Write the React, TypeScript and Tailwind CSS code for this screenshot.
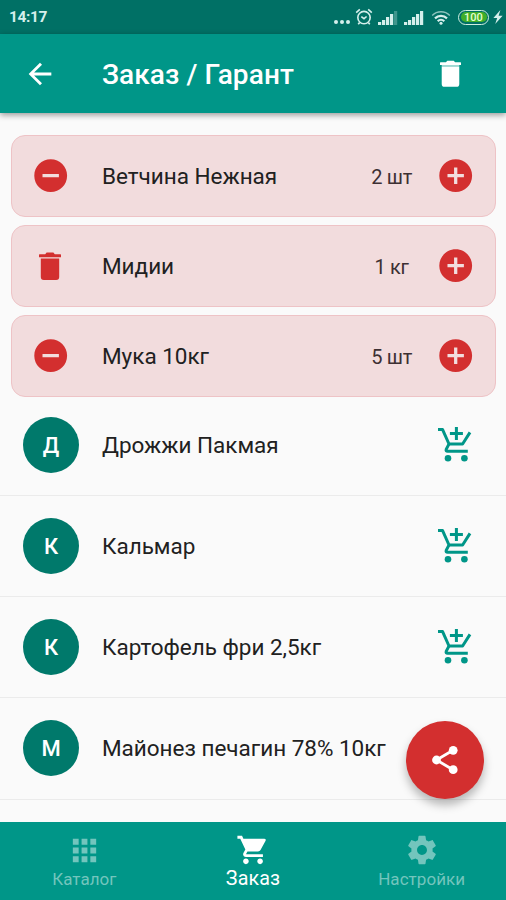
import React from 'react';
import { clsx } from 'clsx';
import { MdAddCircle, MdApps, MdArrowBack, MdRemoveCircle, MdShoppingCart } from 'react-icons/md';

interface OrderItem {
  name: string;
  amount: string;
  last?: boolean;
}

interface CatalogItem {
  name: string;
  letter: string;
}

const orderItems: OrderItem[] = [
  { name: 'Ветчина Нежная', amount: '2 шт' },
  { name: 'Мидии', amount: '1 кг', last: true },
  { name: 'Мука 10кг', amount: '5 шт' },
];

const catalogItems: CatalogItem[] = [
  { name: 'Дрожжи Пакмая', letter: 'Д' },
  { name: 'Кальмар', letter: 'К' },
  { name: 'Картофель фри 2,5кг', letter: 'К' },
  { name: 'Майонез печагин 78% 10кг', letter: 'М' },
];

const SettingsIcon: React.FC = () => (
  <svg viewBox="0 0 24 24" className="size-[34px]" fill="currentColor">
    <path d="M19.43 12.98c.04-.32.07-.64.07-.98s-.03-.66-.07-.98l2.11-1.65c.19-.15.24-.42.12-.64l-2-3.46c-.12-.22-.39-.3-.61-.22l-2.49 1c-.52-.4-1.08-.73-1.69-.98l-.38-2.65C14.46 2.18 14.25 2 14 2h-4c-.25 0-.46.18-.49.42l-.38 2.65c-.61.25-1.17.59-1.69.98l-2.49-1c-.23-.09-.49 0-.61.22l-2 3.46c-.13.22-.07.49.12.64l2.11 1.65c-.04.32-.07.65-.07.98s.03.66.07.98l-2.11 1.65c-.19.15-.24.42-.12.64l2 3.46c.12.22.39.3.61.22l2.49-1c.52.4 1.08.73 1.69.98l.38 2.65c.03.24.24.42.49.42h4c.25 0 .46-.18.49-.42l.38-2.65c.61-.25 1.17-.59 1.69-.98l2.49 1c.23.09.49 0 .61-.22l2-3.46c.12-.22.07-.49-.12-.64l-2.11-1.65zM12 15.5c-1.93 0-3.5-1.57-3.5-3.5s1.57-3.5 3.5-3.5 3.5 1.57 3.5 3.5-1.57 3.5-3.5 3.5z" />
  </svg>
);

const TrashIcon: React.FC<{ className: string; solid?: boolean }> = ({ className, solid }) => (
  <svg viewBox="0 0 22 28" className={className} fill="currentColor">
    <path d="M.6 2.2h5.6L7.6.6h6.8l1.4 1.6h5.6q.6 0 .6.6v2.4H0V2.8q0-.6.6-.6z" />
    <path d="M1.8 6.6h18.4V25a3 3 0 0 1-3 3H4.8a3 3 0 0 1-3-3z" />
    {solid && <path d="M1.8 5.2h18.4v1.4H1.8z" opacity="0.7" />}
  </svg>
);

const AddToCartIcon: React.FC = () => (
  <svg viewBox="0 0 34 35" className="mb-[2px] h-[35px] w-[34px] text-[#009688]" fill="none" stroke="currentColor" strokeWidth="3">
    <path d="M0 2.6h4.6L11 17h13.6L32 5.4" strokeLinejoin="round" />
    <path d="M10.8 17.4 8.2 22.4Q7.6 24.3 9.6 24.3H29.8" />
    <path d="M18.4 0v13M11.9 6.5h13" />
    <circle cx="10" cy="31.3" r="3.3" fill="currentColor" stroke="none" />
    <circle cx="26.4" cy="31.3" r="3.3" fill="currentColor" stroke="none" />
  </svg>
);

const ShareIcon: React.FC = () => (
  <svg viewBox="0 0 28 30" className="h-[30px] w-[28px]" fill="currentColor">
    <path d="M22 5.3 5.5 15 22 24.7" fill="none" stroke="currentColor" strokeWidth="2.8" />
    <circle cx="5.5" cy="15" r="4.4" />
    <circle cx="22.2" cy="5.3" r="4.4" />
    <circle cx="22.2" cy="24.7" r="4.4" />
  </svg>
);

const AlarmIcon: React.FC = () => (
  <svg viewBox="0 0 18 18" className="ml-[5px] h-[18px] w-[18px]" fill="none" stroke="currentColor" strokeWidth="1.6">
    <circle cx="9" cy="9.6" r="6.2" />
    <path d="M6.3 8.6 9 10.7l2.6-2.2M1.2 4.6 4.8 1.4M16.8 4.6l-3.6-3.2M4.6 14.6l-1.4 1.6M13.4 14.6l1.4 1.6" />
  </svg>
);

const SignalIcon: React.FC<{ weak?: boolean }> = ({ weak }) => (
  <svg viewBox="0 0 20 14" className="h-[14px] w-[20px]" fill="currentColor">
    <rect x="0" y="11" width="3.2" height="3" />
    <rect x="4" y="9" width="3.2" height="5" />
    <rect x="8" y="6" width="3.2" height="8" />
    <rect x="12" y="3" width="3.2" height="11" />
    <rect x="16" y="0" width="3.2" height="14" opacity={weak ? 0.3 : 1} />
  </svg>
);

const WifiIcon: React.FC = () => (
  <svg viewBox="0 0 20 15" className="ml-[7px] h-[15px] w-[20px]" fill="none" stroke="currentColor">
    <path d="M1.2 5.4a12.6 12.6 0 0 1 17.6 0" strokeWidth="1.4" opacity="0.65" />
    <path d="M4 8.4a8.6 8.6 0 0 1 12 0" strokeWidth="2.2" />
    <path d="M6.7 11.2a4.8 4.8 0 0 1 6.6 0" strokeWidth="2.2" />
    <circle cx="10" cy="13.2" r="1.5" fill="currentColor" stroke="none" />
  </svg>
);

const StatusBar: React.FC = () => (
  <div className="flex h-[34px] items-center bg-[#007065] pr-[3px] pl-[9px] text-[#d5efec]">
    <span className="flex-1 pt-[2px] text-[15.5px] font-bold tracking-[-0.4px]">14:17</span>
    <div className="flex gap-[2px] pt-[9px]">
      <i className="size-[4px] rounded-full bg-current" />
      <i className="size-[4px] rounded-full bg-current" />
      <i className="size-[4px] rounded-full bg-current" />
    </div>
    <AlarmIcon />
    <div className="ml-[5px] flex gap-[6px] pt-[1px]">
      <SignalIcon weak />
      <SignalIcon />
    </div>
    <WifiIcon />
    <div className="ml-[7px] flex h-[15px] w-[31px] items-center rounded-full border-[1.5px] border-[#cfeee0] p-[1.5px]">
      <div className="flex h-full flex-1 items-center justify-center rounded-full bg-[#3fae2a] text-[11px] leading-none font-medium text-[#e6ffd2]">
        100
      </div>
    </div>
    <svg viewBox="0 0 10 14" className="ml-[4px] h-[14px] w-[10px]" fill="currentColor">
      <path d="M7.4 0 .4 8h3.8L2.2 14 9.6 5.8H5.6z" />
    </svg>
  </div>
);

const OrderCard: React.FC<{ item: OrderItem }> = ({ item }) => (
  <div className="flex h-[82px] items-center rounded-[14px] border border-[#eec3c6] bg-[#f2dcdd] pr-[20px] pl-[19px]">
    <div className="flex w-[40px] justify-center text-[#d32f2f]">
      {item.last ? <TrashIcon className="mr-[2px] h-[28px] w-[22px]" /> : <MdRemoveCircle className="size-[39.4px]" />}
    </div>
    <span className="ml-[31px] flex-1 pt-[2px] text-[22.5px] tracking-[-0.02px]">{item.name}</span>
    <span className="w-[58px] pt-[1px] text-center text-[20px] tracking-[-0.3px] text-[#3d3033]">{item.amount}</span>
    <MdAddCircle className="ml-[15px] size-[39.4px] text-[#d32f2f]" />
  </div>
);

const CatalogRow: React.FC<{ item: CatalogItem; first?: boolean }> = ({ item, first }) => (
  <div
    className={clsx(
      'flex items-center border-b border-[#ebebeb] pr-[34px] pl-[23px]',
      first ? 'h-[99px] pb-[2px]' : 'h-[101.2px]'
    )}
  >
    <div className="flex size-[56px] items-center justify-center rounded-full bg-[#00796b] text-[22px] font-medium text-white">
      {item.letter}
    </div>
    <span className="ml-[23px] flex-1 pt-[1px] text-[22.5px] tracking-[-0.02px] whitespace-nowrap">{item.name}</span>
    <AddToCartIcon />
  </div>
);

const BottomNav: React.FC = () => (
  <nav className="grid h-[78px] shrink-0 grid-cols-3 bg-[#009688] pt-[11px] text-[#73c5bd]">
    <div className="flex flex-col items-center">
      <MdApps className="size-[35px]" />
      <span className="mt-[-1px] text-[17px] leading-[24px] tracking-[0.05px]">Каталог</span>
    </div>
    <div className="flex flex-col items-center text-white">
      <MdShoppingCart className="ml-[1px] size-[34px]" />
      <span className="text-[19.7px] leading-[24px] tracking-[0.1px]">Заказ</span>
    </div>
    <div className="flex flex-col items-center">
      <SettingsIcon />
      <span className="text-[17px] leading-[24px] tracking-[0.05px]">Настройки</span>
    </div>
  </nav>
);

const App: React.FC = () => {
  return (
    <div className="relative flex h-[900px] w-[506px] flex-col overflow-hidden bg-[#fafafa] font-['Roboto',sans-serif] text-[#212121]">
      <StatusBar />
      <header className="flex h-[79px] shrink-0 items-center bg-[#009688] pr-[45px] pl-[23px] text-white shadow-[0_2px_6px_rgba(0,0,0,0.4)]">
        <MdArrowBack className="size-[34px]" />
        <h1 className="ml-[45px] flex-1 pt-[3px] text-[28px] font-medium tracking-[0.1px]">Заказ / Гарант</h1>
        <TrashIcon className="h-[27px] w-[21px]" solid />
      </header>

      <main className="min-h-0 flex-1 overflow-hidden pt-[22px]">
        <div className="mr-[10px] ml-[11px] flex flex-col gap-[8px]">
          {orderItems.map((item) => (
            <OrderCard key={item.name} item={item} />
          ))}
        </div>
        {catalogItems.map((item, i) => (
          <CatalogRow key={item.name} item={item} first={i === 0} />
        ))}
      </main>

      <BottomNav />

      <button className="absolute right-[22px] bottom-[101px] flex size-[78px] items-center justify-center rounded-full bg-[#d32f2f] text-white shadow-[0_6px_10px_rgba(0,0,0,0.28)]">
        <ShareIcon />
      </button>
    </div>
  );
};

export default App;
